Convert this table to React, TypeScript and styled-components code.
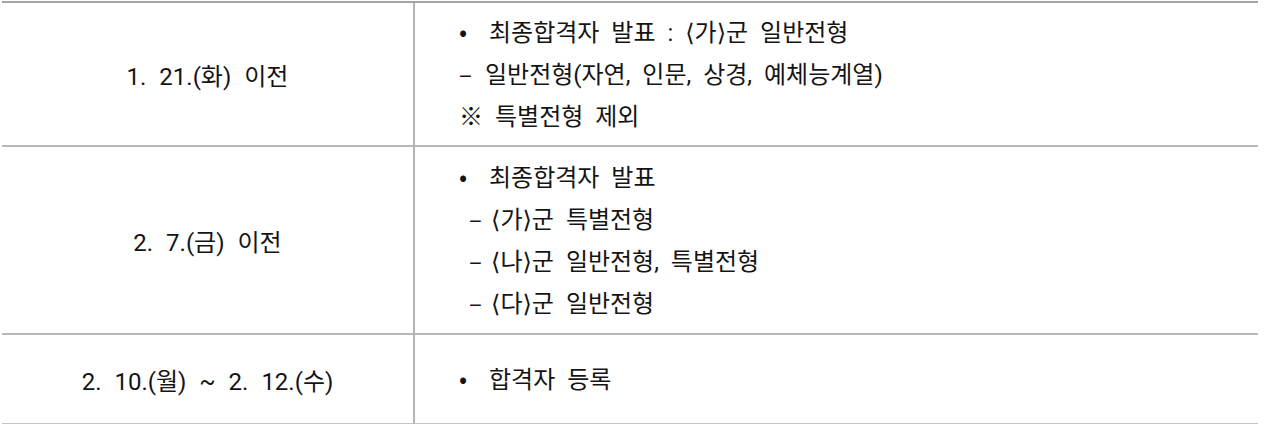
import React from "react"
import styled, { createGlobalStyle } from "styled-components"

const GlobalStyle = createGlobalStyle`
  html, body {
    margin: 0;
    padding: 0;
    background: #ffffff;
  }
  body {
    font-family: Roboto, "Noto Sans CJK KR", sans-serif;
    color: #141414;
  }
`

const Table = styled.div`
  margin: 1px 6px 0 2px;
  display: grid;
  grid-template-columns: 413px 1fr;
  border-top: 2px solid #a3a3a3;
`

const DateCell = styled.div<{ $h: number; $last?: boolean }>`
  height: ${p => p.$h}px;
  display: flex;
  align-items: center;
  justify-content: center;
  border-right: 2px solid #b4b4b4;
  border-bottom: 2px solid ${p => (p.$last ? "#c4c4c4" : "#b8b8b8")};
  font-size: 24px;
  word-spacing: 7px;
  box-sizing: border-box;
`

const DetailCell = styled.div<{ $h: number; $last?: boolean }>`
  height: ${p => p.$h}px;
  display: flex;
  flex-direction: column;
  justify-content: center;
  padding-left: 44px;
  border-bottom: 2px solid ${p => (p.$last ? "#c4c4c4" : "#b8b8b8")};
  font-size: 24px;
  line-height: 39px;
  word-spacing: 6px;
  box-sizing: border-box;
`

const Line = styled.div<{ $indent: number }>`
  padding-left: ${p => p.$indent}px;
  white-space: nowrap;
`

const Mark = styled.span<{ $w: number }>`
  display: inline-block;
  width: ${p => p.$w}px;
  font-family: "Noto Sans CJK KR", sans-serif;
`

const Bracket = styled.span`
  font-family: "DejaVu Sans", sans-serif;
  font-size: 24px;
`

type Line = { mark: string; indent: number; markWidth: number; text: string }
type Row = { date: string; height: number; lines: Line[] }

const rows: Row[] = [
  {
    date: "1. 21.(화) 이전",
    height: 144,
    lines: [
      { mark: "•", indent: 0, markWidth: 30, text: "최종합격자 발표 : ⟨가⟩군 일반전형" },
      { mark: "–", indent: -4, markWidth: 26, text: "일반전형(자연, 인문, 상경, 예체능계열)" },
      { mark: "※", indent: -4, markWidth: 36, text: "특별전형 제외" },
    ],
  },
  {
    date: "2. 7.(금) 이전",
    height: 188,
    lines: [
      { mark: "•", indent: 0, markWidth: 30, text: "최종합격자 발표" },
      { mark: "–", indent: 10, markWidth: 22, text: "⟨가⟩군 특별전형" },
      { mark: "–", indent: 10, markWidth: 22, text: "⟨나⟩군 일반전형, 특별전형" },
      { mark: "–", indent: 10, markWidth: 22, text: "⟨다⟩군 일반전형" },
    ],
  },
  {
    date: "2. 10.(월) ~ 2. 12.(수)",
    height: 90,
    lines: [{ mark: "•", indent: 0, markWidth: 30, text: "합격자 등록" }],
  },
]

// angle brackets come from a font where they are narrow, so ⟨가⟩군 sits tight
const renderText = (text: string) =>
  text.split(/(⟨|⟩)/).map((part, i) =>
    part === "⟨" || part === "⟩" ? (
      <Bracket key={i}>{part}</Bracket>
    ) : (
      <React.Fragment key={i}>{part}</React.Fragment>
    )
  )

export default function App() {
  return (
    <>
      <GlobalStyle />
      <Table>
        {rows.map((row, i) => (
          <React.Fragment key={i}>
            <DateCell $h={row.height} $last={i === rows.length - 1}>
              {row.date}
            </DateCell>
            <DetailCell $h={row.height} $last={i === rows.length - 1}>
              {row.lines.map((l, j) => (
                <Line key={j} $indent={l.indent}>
                  <Mark $w={l.markWidth}>{l.mark}</Mark>
                  {renderText(l.text)}
                </Line>
              ))}
            </DetailCell>
          </React.Fragment>
        ))}
      </Table>
    </>
  )
}
